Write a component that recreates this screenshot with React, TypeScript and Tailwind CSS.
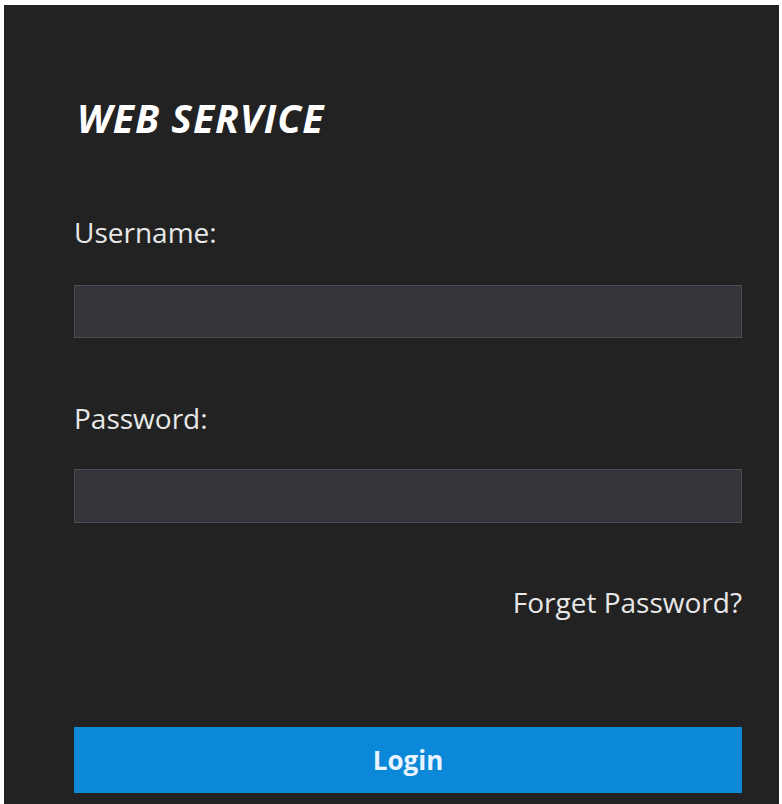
import React from 'react';

export default function App() {
  return (
    <div className="w-[782px] h-[804px] bg-white pt-[5px] pl-[4px] pr-[3px] overflow-hidden">
      <div
        className="h-full bg-[#222222] pl-[70px] pr-[37px] pt-[89px] flex flex-col"
        style={{ fontFamily: '"Open Sans", "Liberation Sans", sans-serif' }}
      >
        {/* Title */}
        <h1 className="ml-[3px] text-[39px] leading-[48px] font-bold italic text-white tracking-[1px]">
          WEB SERVICE
        </h1>

        {/* Username */}
        <label className="mt-[72px] text-[28px] leading-[36px] text-[#e8e8e8]">Username:</label>
        <input
          type="text"
          className="mt-[35px] h-[53px] w-full bg-[#33353b] border border-[#4b4c51] outline-none"
        />

        {/* Password */}
        <label className="mt-[62px] text-[28px] leading-[36px] text-[#e8e8e8]">Password:</label>
        <input
          type="password"
          className="mt-[33px] h-[54px] w-full bg-[#33353b] border border-[#4b4c51] outline-none"
        />

        <div className="flex justify-end mt-[61px]">
          <a className="text-[28px] leading-[36px] text-[#e8e8e8] cursor-pointer">Forget Password?</a>
        </div>

        <button className="mt-[107px] h-[66px] w-full bg-[#0b88d8] text-[#e8f4ff] text-[26px] font-bold">
          Login
        </button>
      </div>
    </div>
  );
}
